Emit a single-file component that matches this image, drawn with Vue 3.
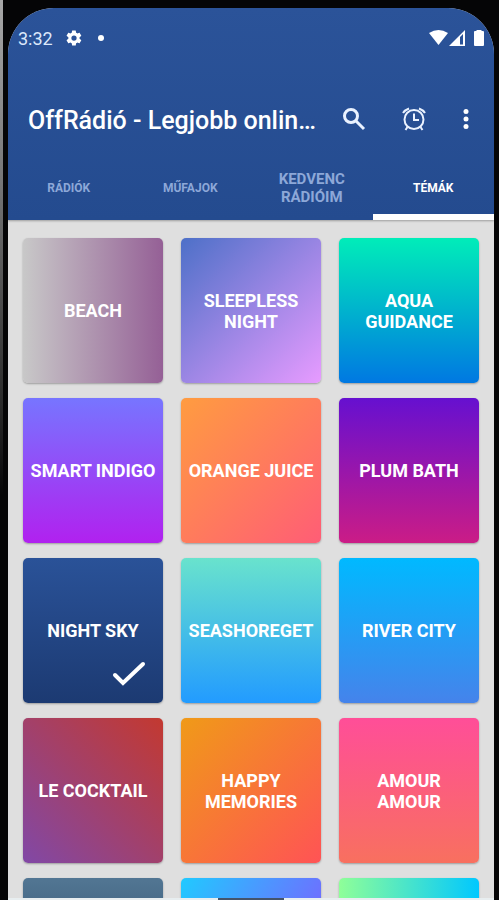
<template>
    <div class="phone">
        <div class="screen">
            <header class="header">
                <div class="status">
                    <span class="time">3:32</span>
                    <svg class="gear" viewBox="0 0 24 24" aria-hidden="true">
                        <path d="M19.4 13a7.6 7.6 0 0 0 0-2l2.1-1.7c.2-.1.2-.4.1-.6l-2-3.5c-.1-.2-.4-.3-.6-.2l-2.5 1a7.3 7.3 0 0 0-1.7-1l-.4-2.6a.5.5 0 0 0-.5-.4h-4a.5.5 0 0 0-.5.4L9 5a7.3 7.3 0 0 0-1.7 1l-2.5-1c-.2-.1-.5 0-.6.2l-2 3.5c-.1.2-.1.5.1.6L4.500 11a7.6 7.6 0 0 0 0 2l-2.2 1.7c-.2.1-.2.4-.1.6l2 3.5c.1.2.4.3.6.2l2.5-1a7.3 7.3 0 0 0 1.7 1l.4 2.6c0 .2.2.4.5.4h4c.3 0 .5-.2.5-.4l.4-2.6a7.3 7.3 0 0 0 1.7-1l2.5 1c.2.1.5 0 .6-.2l2-3.5c.1-.2.1-.5-.1-.6zM12 15.500a3.5 3.5 0 1 1 0-7 3.5 3.5 0 0 1 0 7z" />
                    </svg>
                    <span class="dot"></span>
                    <svg class="signals" viewBox="0 0 56 18" aria-hidden="true">
                        <path d="M0 4Q9.5-2 19 4L9.5 16z" />
                        <path d="M20 17 36 1v16zM31 8v7.500h3V5z" fill-rule="evenodd" />
                        <path d="M45 3q0-1 1-1h1.500V1h5v1H54q1 0 1 1v13q0 1-1 1h-8q-1 0-1-1z" />
                    </svg>
                </div>
                <div class="toolbar">
                    <h1 class="title">OffRádió - Legjobb onlin…</h1>
                    <button class="action" aria-label="Keresés">
                        <svg class="icon" viewBox="0 0 24 24">
                            <circle cx="9" cy="9" r="6.5" class="line" />
                            <path d="M14 14l8 8" class="line" />
                        </svg>
                    </button>
                    <button class="action" aria-label="Ébresztő">
                        <svg class="icon" viewBox="0 0 24 24">
                            <circle cx="12" cy="12.5" r="9.5" class="line thin" />
                            <path d="M12 6.500V13h5M1 6Q3 3 7 1.500M23 6Q21 3 17 1.500M5.500 20 3.500 23M18.500 20l2 3" class="line thin" />
                        </svg>
                    </button>
                    <button class="action more" aria-label="Menü">
                        <svg class="icon" viewBox="0 0 24 24">
                            <circle cx="12" cy="3" r="3" />
                            <circle cx="12" cy="12" r="3" />
                            <circle cx="12" cy="21" r="3" />
                        </svg>
                    </button>
                </div>
                <nav class="tabs">
                    <button v-for="tab in tabs" :key="tab" class="tab" :class="{ active: tab === activeTab, long: tab.includes(' ') }" @click="activeTab = tab">{{ tab }}</button>
                </nav>
            </header>
            <main class="grid">
                <button v-for="theme in themes" :key="theme.name" class="card" :class="theme.style" :aria-pressed="theme.name === selected" @click="selected = theme.name">
                    <span>{{ theme.name }}</span>
                    <svg v-if="theme.name === selected" class="check" viewBox="0 0 34 26">
                        <path d="M3 14l8 8L31 3" />
                    </svg>
                </button>
                <div class="card ocean"></div>
                <div class="card violet"></div>
                <div class="card mint"></div>
            </main>
            <div class="bottom"><span class="handle"></span></div>
        </div>
    </div>
</template>
<script setup>
import { ref } from 'vue'

const tabs = ['RÁDIÓK', 'MŰFAJOK', 'KEDVENC RÁDIÓIM', 'TÉMÁK']
const activeTab = ref('TÉMÁK')
const selected = ref('NIGHT SKY')
const themes = [
    { name: 'BEACH', style: 'beach' },
    { name: 'SLEEPLESS NIGHT', style: 'sleepless' },
    { name: 'AQUA GUIDANCE', style: 'aqua' },
    { name: 'SMART INDIGO', style: 'indigo' },
    { name: 'ORANGE JUICE', style: 'orange' },
    { name: 'PLUM BATH', style: 'plum' },
    { name: 'NIGHT SKY', style: 'night' },
    { name: 'SEASHOREGET', style: 'seashore' },
    { name: 'RIVER CITY', style: 'river' },
    { name: 'LE COCKTAIL', style: 'cocktail' },
    { name: 'HAPPY MEMORIES', style: 'happy' },
    { name: 'AMOUR AMOUR', style: 'amour' }
]
</script>
<style>
body {
    margin: 0;
    background: #050506;
}
</style>
<style scoped>
.phone {
    box-sizing: border-box;
    height: 100vh;
    padding: 8px 5px 0 8px;
    overflow: hidden;
    background: linear-gradient(#a8a8a8, #777 20%, #2a2a2a 45%, #050506 55%) left top / 3px 100% no-repeat #050506;
    font-family: Roboto, "Liberation Sans", sans-serif;
}

.screen {
    display: flex;
    flex-direction: column;
    height: 100%;
    overflow: hidden;
    position: relative;
    border-radius: 46px 46px 0 0;
    background: #dfdfdf;
}

button {
    border: 0;
    padding: 0;
    margin: 0;
    background: none;
    color: white;
    font-family: inherit;
    cursor: pointer;
}

.header {
    flex: none;
    background: linear-gradient(#2b5399, #244b8f);
    color: white;
    box-shadow: 0 1px 2px rgba(0, 0, 0, 0.3);
}

.status {
    display: flex;
    align-items: center;
    height: 60px;
    padding: 0 9px 0 10px;
}

.time {
    font-size: 18px;
    color: #dce8fb;
}

.gear {
    width: 18px;
    height: 18px;
    margin-left: 12px;
    fill: white;
}

.dot {
    width: 6px;
    height: 6px;
    margin-left: 15px;
    border-radius: 50%;
    background: white;
}

.signals {
    width: 56px;
    height: 18px;
    margin-left: auto;
    fill: white;
}

.toolbar {
    display: flex;
    align-items: center;
    height: 86px;
    padding: 8px 6px 0 20px;
}

.title {
    flex: 1;
    margin: 0;
    padding-top: 4px;
    font-size: 25px;
    font-weight: 500;
    line-height: 32px;
    white-space: nowrap;
}

.action {
    display: flex;
    justify-content: center;
    align-items: center;
    width: 60px;
    height: 48px;
}

.more {
    width: 44px;
}

.icon {
    width: 24px;
    height: 24px;
    fill: white;
}

.more .icon {
    width: 20px;
    height: 20px;
}

.line {
    fill: none;
    stroke: #eaf2ff;
    stroke-width: 3;
}

.thin {
    stroke-width: 2;
}

.tabs {
    display: grid;
    grid-template-columns: repeat(4, 1fr);
    height: 58px;
}

.tab {
    box-sizing: border-box;
    padding: 0 24px;
    border-bottom: 6px solid transparent;
    color: #8da8d8;
    font-size: 12px;
    font-weight: 700;
    line-height: 18px;
}

.tab.long {
    font-size: 15px;
}

.tab.active {
    color: white;
    border-bottom-color: white;
}

.grid {
    display: grid;
    grid-template-columns: repeat(3, 1fr);
    grid-auto-rows: 145px;
    gap: 15px 18px;
    padding: 18px 15px;
}

.card {
    display: flex;
    justify-content: center;
    align-items: center;
    position: relative;
    padding: 0 6px;
    border-radius: 5px;
    box-shadow: 0 1px 2px rgba(0, 0, 0, 0.3);
    font-size: 18px;
    font-weight: 700;
    line-height: 21px;
}

.check {
    position: absolute;
    right: 17px;
    bottom: 16px;
    width: 34px;
    height: 26px;
    fill: none;
    stroke: white;
    stroke-width: 4;
    stroke-linecap: round;
}

.beach { background: linear-gradient(90deg, #c8c8c8, #956096); }
.sleepless { background: linear-gradient(135deg, #4d70c8, #e79bff); }
.aqua { background: linear-gradient(#00edb9, #0078e2); }
.indigo { background: linear-gradient(#7775ff, #b121ef); }
.orange { background: linear-gradient(135deg, #ff9c40, #ff5d76); }
.plum { background: linear-gradient(#6610d0, #cb1c86); }
.night { background: linear-gradient(#2a5298, #1c3a72); }
.seashore { background: linear-gradient(#69e3cd, #229bff); }
.river { background: linear-gradient(#00b9ff, #4583eb); }
.cocktail { background: linear-gradient(45deg, #8148a6, #c33930); }
.happy { background: linear-gradient(135deg, #f09a18, #ff5355); }
.amour { background: linear-gradient(#ff4e98, #f8705f); }
.ocean { background: linear-gradient(#527693, #1c3d59); }
.violet { background: linear-gradient(120deg, #20caff, #7567ff 75%); }
.mint { background: linear-gradient(90deg, #8fff98, #00c8ff); }

.bottom {
    position: absolute;
    left: 0;
    right: 0;
    bottom: 0;
    display: flex;
    justify-content: center;
    height: 2px;
    background: #e8eef0;
}

.handle {
    width: 66px;
    background: #44546c;
}
</style>
